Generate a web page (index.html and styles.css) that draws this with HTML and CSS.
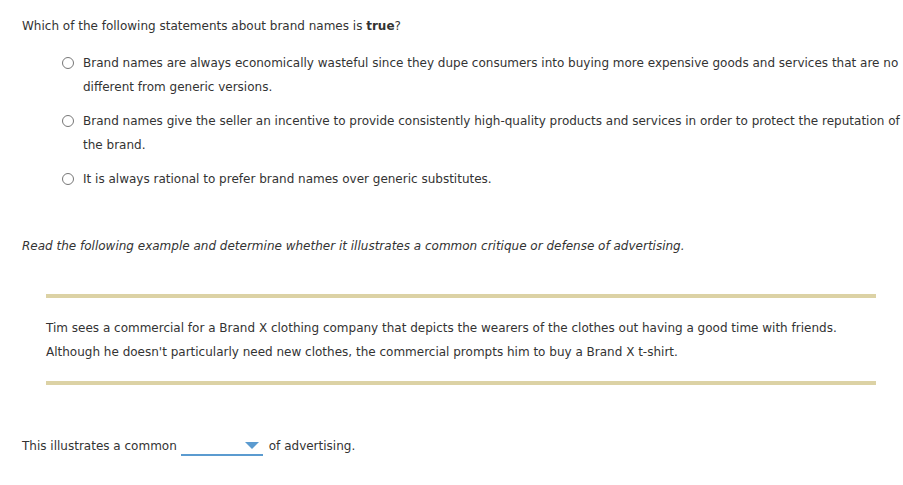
FILE: index.html
```html
<!DOCTYPE html>
<html>
<head>
<meta charset="utf-8">
<link rel="stylesheet" href="styles.css">
</head>
<body>
<div class="page">
  <p class="question">Which of the following statements about brand names is <b>true</b>?</p>
  <ul class="options">
    <li class="option"><span class="radio"></span><span class="label">Brand names are always economically wasteful since they dupe consumers into buying more expensive goods and services that are no<br>different from generic versions.</span></li>
    <li class="option"><span class="radio"></span><span class="label">Brand names give the seller an incentive to provide consistently high-quality products and services in order to protect the reputation of<br>the brand.</span></li>
    <li class="option"><span class="radio"></span><span class="label">It is always rational to prefer brand names over generic substitutes.</span></li>
  </ul>
  <p class="instruction">Read the following example and determine whether it illustrates a common critique or defense of advertising.</p>
  <div class="example">
    <p>Tim sees a commercial for a Brand X clothing company that depicts the wearers of the clothes out having a good time with friends.<br>Although he doesn't particularly need new clothes, the commercial prompts him to buy a Brand X t-shirt.</p>
  </div>
  <p class="answer">This illustrates a common <span class="select"><span class="caret"></span></span> of advertising.</p>
</div>
</body>
</html>
```
FILE: styles.css
```css
body {
  margin: 0;
  background: #fff;
}
.page {
  padding: 14px 27px 0 22px;
  font-family: "DejaVu Sans", Verdana, sans-serif;
  font-size: 12px;
  color: #333;
}
p { margin: 0; }
.question {
  line-height: 24px;
}
.options {
  list-style: none;
  margin: 13px 0 0 0;
  padding: 0 0 0 40px;
  display: flex;
  flex-direction: column;
  gap: 10px;
}
.option {
  display: flex;
  align-items: flex-start;
  line-height: 24px;
  white-space: nowrap;
}
.radio {
  flex: none;
  width: 10px;
  height: 10px;
  border: 1px solid #777;
  border-radius: 50%;
  margin: 6px 9px 0 0;
}
.instruction {
  font-style: italic;
  line-height: 24px;
  margin-top: 43px;
}
.example {
  margin: 36px 0 0 24px;
  border-top: 4px solid #dcd2a5;
  border-bottom: 4px solid #dcd2a5;
  padding: 18px 0 17px;
}
.example p {
  line-height: 24px;
}
.answer {
  margin-top: 49px;
  line-height: 24px;
  display: flex;
  align-items: center;
}
.select {
  display: inline-flex;
  justify-content: flex-end;
  align-items: flex-start;
  width: 82px;
  height: 18px;
  margin: 0 6px 0 4px;
  border-bottom: 2px solid #5b9bd0;
  box-sizing: border-box;
  position: relative;
  top: 1px;
}
.caret {
  width: 0;
  height: 0;
  border-left: 7px solid transparent;
  border-right: 7px solid transparent;
  border-top: 7px solid #5b9bd0;
  margin: 4px 4px 0 0;
}
```
